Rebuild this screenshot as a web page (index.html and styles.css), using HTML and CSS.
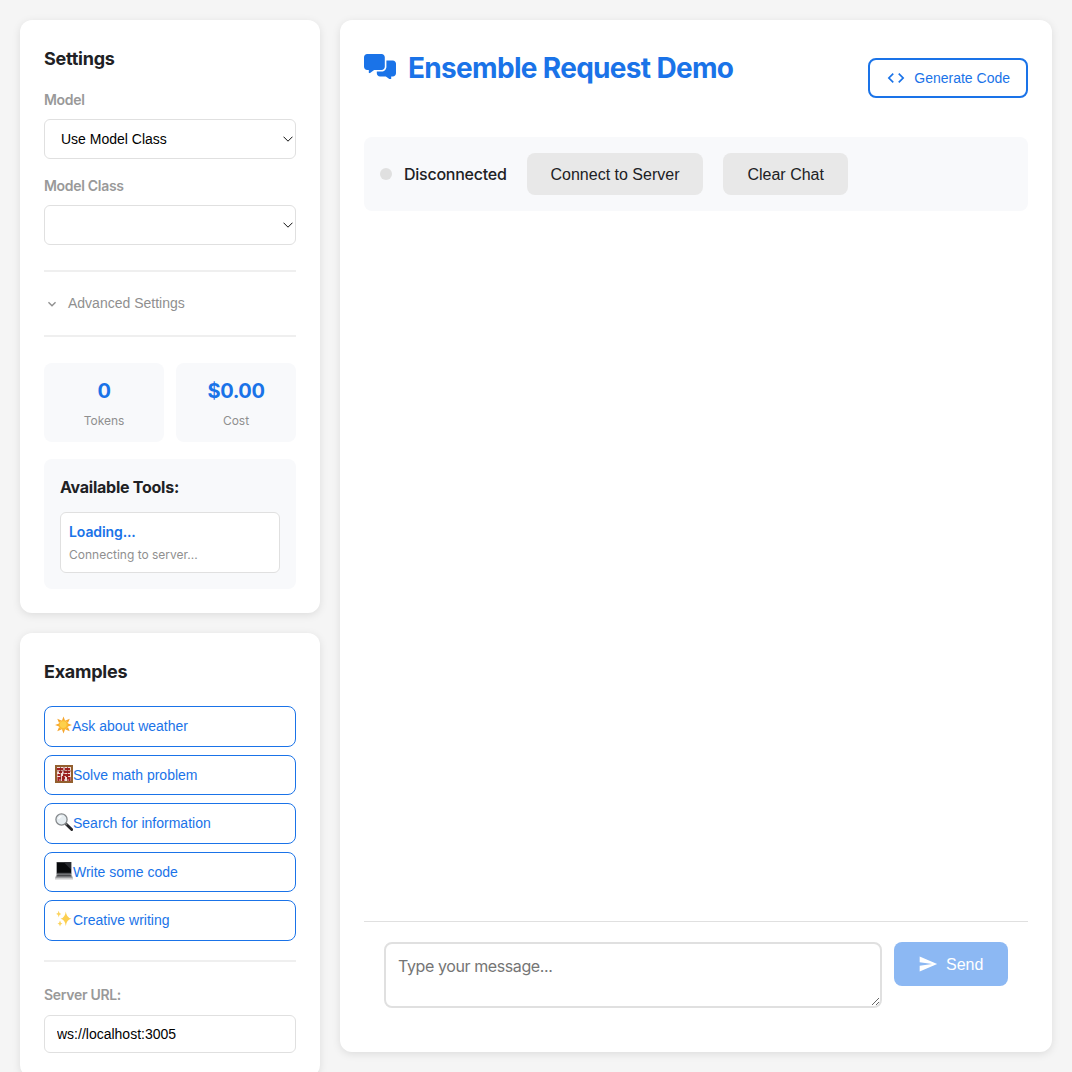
FILE: index.html
```html
<!DOCTYPE html>
<html lang="en">
<head>
<meta charset="utf-8">
<title>Ensemble Request Demo</title>
<link rel="stylesheet" href="styles.css">
</head>
<body>
<div class="layout">
  <aside class="sidebar">
    <section class="card settings">
      <h2 class="card-title">Settings</h2>
      <label class="field-label" for="model">Model</label>
      <select class="select" id="model"><option>Use Model Class</option></select>
      <label class="field-label second" for="model-class">Model Class</label>
      <select class="select" id="model-class"><option></option></select>
      <div class="advanced">
        <svg width="16" height="16" viewBox="0 0 24 24" fill="currentColor"><path d="M7.41 8.59L12 13.17l4.59-4.58L18 10l-6 6-6-6z"/></svg>
        <span class="advanced-text">Advanced Settings</span>
      </div>
      <div class="stats">
        <div class="stat"><div class="stat-value">0</div><div class="stat-label">Tokens</div></div>
        <div class="stat"><div class="stat-value">$0.00</div><div class="stat-label">Cost</div></div>
      </div>
      <div class="tools">
        <h3 class="tools-title">Available Tools:</h3>
        <div class="tool">
          <div class="tool-name">Loading...</div>
          <div class="tool-desc">Connecting to server...</div>
        </div>
      </div>
    </section>
    <section class="card examples">
      <h2 class="card-title">Examples</h2>
      <div class="example-list">
        <button class="example">
          <svg class="emoji" width="17" height="18" viewBox="0 0 18 18"><path fill="#f5a52c" d="M9 0l1.700 4.500H7.300zM9 18l-1.700-4.500h3.400zM0 9l4.500-1.700v3.400zM18 9l-4.500 1.700V7.300zM2.400 2.400l4.300 1.800-2.500 2.500zM15.600 2.400l-1.800 4.300-2.500-2.500zM2.400 15.600l1.800-4.300 2.500 2.500zM15.600 15.600l-4.300-1.800 2.500-2.500z"/><circle cx="9" cy="9" r="5.200" fill="#fbb931"/><circle cx="8.700" cy="8.500" r="3.600" fill="#fdd04b"/></svg>
          <span>Ask about weather</span>
        </button>
        <button class="example">
          <svg class="emoji" width="18" height="18" viewBox="0 0 18 18"><path fill="#93602f" d="M0 0h18v18H0z"/><path fill="#f3dedb" d="M2 2h14v14H2z"/><path stroke="#a51f20" stroke-width="2.200" d="M2 4h6M10 4h5M4 7h3M9 7h6M2.500 10h3M8 10h3M13 10h2M4 13h2M8 13h2M12 13h3M3.500 12v4M8 11v5M12 9v3M14.500 12v4"/><path stroke="#7e2420" stroke-width=".7" d="M2 6h14M5.500 2v14M9 2v14M12.500 2v14"/></svg>
          <span>Solve math problem</span>
        </button>
        <button class="example">
          <svg class="emoji" width="18" height="18" viewBox="0 0 18 18"><path d="M11 11l5.700 5.600" stroke="#25262a" stroke-width="2.800" stroke-linecap="round"/><path d="M10 10l2 2" stroke="#777" stroke-width="1.500"/><circle cx="6.500" cy="6.500" r="5.600" fill="#e6edf1" stroke="#85898c" stroke-width="1.300"/><path d="M3.500 6a3.500 3.500 0 0 1 3-2.700" fill="none" stroke="#fff" stroke-width="1.300"/></svg>
          <span>Search for information</span>
        </button>
        <button class="example">
          <svg class="emoji" width="18" height="18" viewBox="0 0 18 18"><path fill="#55575a" d="M1.500 0h15v12h-15z"/><path fill="#08090b" d="M2 .6h14v10.200H2z"/><path fill="#292b30" d="M9 .6h7v7z"/><path fill="#9b9c9e" d="M1.500 12h15l1.500 4.500H0z"/><path fill="#48494c" d="M2.500 12.500h13l.8 2H1.700z"/><path fill="#c6c7c9" d="M0 16.500h18v1H0z"/></svg>
          <span>Write some code</span>
        </button>
        <button class="example">
          <svg class="emoji" width="18" height="18" viewBox="0 0 18 18"><path fill="#fccf50" d="M10.800 1.500Q11.500 7.800 16.500 8.800 11.500 9.800 10.800 16 10.100 9.800 5.500 8.800 10.100 7.800 10.800 1.500z"/><path fill="#fcd35d" d="M3.700.8q.3 3 2.500 3.300-2.200.3-2.500 3.300Q3.400 4.400 1 4.100 3.400 3.800 3.700.8zM5 10.500q.3 2.500 2.500 3-2.200.5-2.500 3-.3-2.500-2.500-3 2.200-.5 2.500-3z"/></svg>
          <span>Creative writing</span>
        </button>
      </div>
      <div class="server">
        <label class="field-label server-label" for="url">Server URL:</label>
        <input class="input" id="url" type="text" value="ws://localhost:3005">
      </div>
    </section>
  </aside>
  <main class="card main">
    <header class="header">
      <h1 class="title">
        <svg class="title-icon" width="32" height="25.600" viewBox="0 0 640 512" fill="currentColor"><path d="M64 0C28.700 0 0 28.700 0 64v192c0 35.300 28.700 64 64 64h32v48c0 6.100 3.400 11.600 8.800 14.300s11.900 2.100 16.800-1.500L202.700 320H352c35.300 0 64-28.700 64-64V64c0-35.300-28.700-64-64-64H64zM448 128v128c0 53-43 96-96 96h-96v32c0 35.300 28.700 64 64 64h117.300l81.100 60.800c4.800 3.600 11.300 4.200 16.800 1.500s8.800-8.200 8.800-14.300v-48h32c35.300 0 64-28.700 64-64V192c0-35.300-28.700-64-64-64H448z"/></svg>
        <span>Ensemble Request Demo</span>
      </h1>
      <button class="generate">
        <svg width="20" height="20" viewBox="0 0 24 24" fill="currentColor"><path d="M9.400 16.600L4.800 12l4.600-4.600L8 6l-6 6 6 6 1.400-1.400zm5.200 0l4.600-4.600-4.600-4.600L16 6l6 6-6 6-1.400-1.400z"/></svg>
        <span>Generate Code</span>
      </button>
    </header>
    <div class="status-bar">
      <span class="dot"></span>
      <span class="status-text">Disconnected</span>
      <button class="btn">Connect to Server</button>
      <button class="btn">Clear Chat</button>
    </div>
    <div class="messages"></div>
    <div class="composer">
      <textarea class="message-input" placeholder="Type your message..."></textarea>
      <button class="send">
        <svg width="20" height="20" viewBox="0 0 24 24" fill="currentColor"><path d="M2.010 21L23 12 2.010 3 2 10l15 2-15 2z"/></svg>
        <span class="send-text">Send</span>
      </button>
    </div>
  </main>
</div>
</body>
</html>
```
FILE: styles.css
```css
* { box-sizing: border-box; }

body {
  margin: 0;
  height: 1072px;
  overflow: hidden;
  background: #f5f5f5;
  color: #202124;
  font-family: Inter, "Liberation Sans", sans-serif;
}

h1, h2, h3 { margin: 0; }
svg { display: block; flex: none; }
button, select, input { font-family: "Liberation Sans", Arial, sans-serif; }

.layout {
  display: grid;
  grid-template-columns: 300px 712px;
  gap: 20px;
  align-items: start;
  padding: 20px;
}

.sidebar { display: flex; flex-direction: column; gap: 20px; }

.card {
  background: #fff;
  border-radius: 12px;
  box-shadow: 0 2px 8px rgba(0, 0, 0, 0.1);
}

.settings { height: 593px; padding: 24px; }
.examples { height: 444px; padding: 24px; }

.card-title {
  height: 30px;
  line-height: 30px;
  font-size: 18px;
  font-weight: 700;
  letter-spacing: -0.25px;
}

.field-label {
  display: block;
  height: 20px;
  margin: 16px 0 9px;
  line-height: 20px;
  font-size: 14px;
  font-weight: 600;
  letter-spacing: -0.3px;
  color: #999;
}
.field-label.second { margin-top: 17.500px; }

.select {
  display: block;
  width: 100%;
  height: 39.500px;
  padding: 0 16px;
  border: 1px solid #e0e0e0;
  border-radius: 6px;
  appearance: none;
  background: #fff url("data:image/svg+xml,%3Csvg xmlns='http://www.w3.org/2000/svg' width='10' height='6' viewBox='0 0 10 6'%3E%3Cpath d='M.5.700L5 5.200 9.500.700' fill='none' stroke='%23111'/%3E%3C/svg%3E") no-repeat right 2px center;
  color: #000;
  font-size: 14px;
}

.advanced {
  display: flex;
  align-items: center;
  gap: 8px;
  height: 67px;
  margin-top: 25.500px;
  border-top: 2px solid #efefef;
  border-bottom: 2px solid #efefef;
  font-family: "Liberation Sans", Arial, sans-serif;
  font-size: 14px;
  color: #8f8f8f;
}
.advanced-text { margin-top: -2px; }

.stats {
  display: grid;
  grid-template-columns: 1fr 1fr;
  gap: 12px;
  margin-top: 25.500px;
}
.stat {
  height: 79px;
  padding-top: 15px;
  border-radius: 8px;
  background: #f8f9fb;
  text-align: center;
}
.stat-value {
  height: 26px;
  line-height: 26px;
  font-size: 20px;
  font-weight: 700;
  letter-spacing: -0.4px;
  color: #1a73e8;
}
.stat-label {
  margin-top: 8px;
  line-height: 18px;
  font-size: 12px;
  color: #8f8f8f;
}

.tools {
  height: 130.500px;
  margin-top: 17px;
  padding: 15px 16px 16px;
  border-radius: 8px;
  background: #f8f9fb;
}
.tools-title {
  height: 26px;
  line-height: 26px;
  font-size: 16px;
  font-weight: 700;
  letter-spacing: -0.25px;
}
.tool {
  height: 61px;
  margin-top: 12px;
  padding: 8px;
  border: 1px solid #e0e0e0;
  border-radius: 6px;
  background: #fff;
}
.tool-name {
  line-height: 22px;
  font-size: 14px;
  font-weight: 600;
  letter-spacing: -0.1px;
  color: #1a73e8;
}
.tool-desc {
  margin-top: 2px;
  line-height: 20px;
  font-size: 12px;
  color: #8f8f8f;
}

.example-list {
  display: flex;
  flex-direction: column;
  gap: 8px;
  margin-top: 19px;
}
.example {
  display: flex;
  align-items: center;
  height: 40.500px;
  padding: 0 10px;
  border: 1px solid #1a73e8;
  border-radius: 8px;
  background: #fff;
  color: #1a73e8;
  font-size: 14px;
}
.emoji { margin-top: -2px; }

.server {
  margin-top: 19.500px;
  border-top: 2px solid #efefef;
}
.server-label { margin: 23px 0 10px; }
.input {
  display: block;
  width: 100%;
  height: 38px;
  padding: 0 12px;
  border: 1px solid #e0e0e0;
  border-radius: 6px;
  color: #000;
  font-size: 14px;
}

.main {
  display: flex;
  flex-direction: column;
  height: 1032px;
  padding: 24px;
}
.header {
  display: flex;
  justify-content: space-between;
  height: 93px;
}
.title {
  display: flex;
  align-items: center;
  gap: 12px;
  height: 47px;
  font-size: 28px;
  font-weight: 700;
  letter-spacing: -0.68px;
  color: #1a73e8;
}
.title-icon { margin-top: -2px; }
.generate {
  display: flex;
  align-items: center;
  gap: 8px;
  height: 40px;
  margin-top: 14.400px;
  padding: 0 16px;
  border: 2px solid #1a73e8;
  border-radius: 8px;
  background: #fff;
  color: #1a73e8;
  font-size: 14px;
}

.status-bar {
  display: flex;
  align-items: center;
  height: 74px;
  padding: 0 16px;
  border-radius: 8px;
  background: #f8f9fb;
}
.dot {
  width: 12px;
  height: 12px;
  margin-right: 12px;
  border-radius: 50%;
  background: #e0e0e0;
}
.status-text {
  width: 102.500px;
  font-size: 16px;
  font-weight: 500;
  letter-spacing: -0.25px;
  white-space: nowrap;
}
.btn {
  height: 42px;
  margin-left: 20px;
  padding: 1px 24px 0;
  border: 0;
  border-radius: 8px;
  background: #e8e8e8;
  color: #202124;
  font-size: 16px;
}

.messages { flex: 1; }

.composer {
  display: flex;
  align-items: flex-start;
  gap: 12px;
  height: 107px;
  padding: 20px 20px 0;
  border-top: 1px solid #e0e0e0;
}
.message-input {
  display: block;
  flex: 1;
  height: 66px;
  padding: 12px;
  border: 2px solid #e0e0e0;
  border-radius: 8px;
  font-family: Inter, "Liberation Sans", sans-serif;
  font-size: 16px;
  letter-spacing: -0.4px;
  resize: vertical;
}
.send {
  display: flex;
  align-items: center;
  gap: 8px;
  width: 114px;
  height: 44px;
  padding: 0 24px;
  border: 0;
  border-radius: 8px;
  background: #8cb8f3;
  color: #fff;
  font-size: 16px;
}
.send-text { margin-top: 1px; }
```
